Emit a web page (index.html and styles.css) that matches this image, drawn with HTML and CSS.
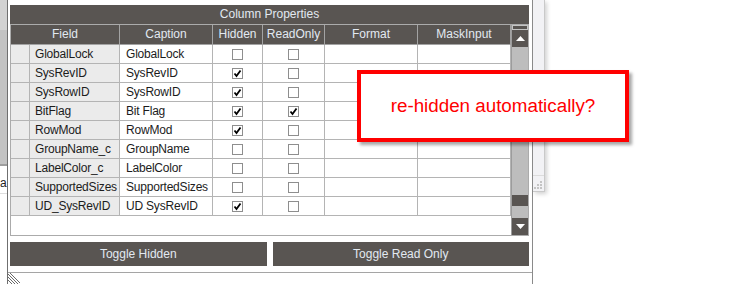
FILE: index.html
```html
<!DOCTYPE html>
<html lang="en">
<head>
    <meta charset="UTF-8">
    <meta name="viewport" content="width=device-width, initial-scale=1.0">
    <title>Column Properties</title>
    <link rel="stylesheet" href="styles.css">
</head>
<body>

    <div class="desktop">
        <!-- Window behind the dialog (left side) -->
        <div class="back-window">
            <div class="back-top"></div>
            <div class="back-bottom"><span class="back-text">a</span></div>
        </div>

        <!-- Panel behind the dialog (right side) -->
        <div class="side-panel">
            <div class="side-grip">
                <svg width="8" height="8" viewBox="0 0 8 8">
                    <rect x="6" y="0" width="2" height="2" fill="#c4c4c4"/>
                    <rect x="3" y="3" width="2" height="2" fill="#c4c4c4"/>
                    <rect x="6" y="3" width="2" height="2" fill="#c4c4c4"/>
                    <rect x="0" y="6" width="2" height="2" fill="#c4c4c4"/>
                    <rect x="3" y="6" width="2" height="2" fill="#c4c4c4"/>
                    <rect x="6" y="6" width="2" height="2" fill="#c4c4c4"/>
                </svg>
            </div>
        </div>

        <!-- Column Properties dialog -->
        <div class="dialog">
            <div class="dialog-body">
                <div class="grid">
                    <div class="grid-title">Column Properties</div>
                    <div class="grid-body">
                        <div class="table-wrap">
                            <div class="row head">
                                <div class="cell span2">Field</div>
                                <div class="cell">Caption</div>
                                <div class="cell">Hidden</div>
                                <div class="cell">ReadOnly</div>
                                <div class="cell">Format</div>
                                <div class="cell">MaskInput</div>
                            </div>
                            <div id="rows"></div>
                        </div>
                        <div class="vscroll">
                            <div class="vs-top"></div>
                            <div class="vs-btn">
                                <svg width="9" height="5" viewBox="0 0 9 5"><path d="M0 5 L4.5 0 L9 5 Z" fill="#fff"/></svg>
                            </div>
                            <div class="vs-track"></div>
                            <div class="vs-thumb"></div>
                            <div class="vs-track-end"></div>
                            <div class="vs-btn">
                                <svg width="9" height="5" viewBox="0 0 9 5"><path d="M0 0 L9 0 L4.5 5 Z" fill="#fff"/></svg>
                            </div>
                        </div>
                    </div>
                </div>

                <div class="actions">
                    <button class="btn-dark">Toggle Hidden</button>
                    <button class="btn-dark">Toggle Read Only</button>
                </div>
            </div>

            <div class="dialog-footer">
                <svg class="resize-grip" width="12" height="11" viewBox="0 0 12 11">
                    <path d="M0 1 L10 11 M0 4 L7 11 M0 7 L4 11 M2 0 L12 10" stroke="#6a6a6a" stroke-width="1"/>
                </svg>
            </div>
        </div>

        <!-- Annotation callout -->
        <div class="callout">re-hidden automatically?</div>
    </div>

    <script>
        // Column rows: field, caption, hidden, readOnly
        const columns = [
            ["GlobalLock", "GlobalLock", false, false],
            ["SysRevID", "SysRevID", true, false],
            ["SysRowID", "SysRowID", true, false],
            ["BitFlag", "Bit Flag", true, true],
            ["RowMod", "RowMod", true, false],
            ["GroupName_c", "GroupName", false, false],
            ["LabelColor_c", "LabelColor", false, false],
            ["SupportedSizes", "SupportedSizes", false, false],
            ["UD_SysRevID", "UD SysRevID", true, false]
        ];

        const tick = '<svg width="9" height="9" viewBox="0 0 9 9"><path d="M1.5 4.5 L3.5 7 L7.5 1.5" fill="none" stroke="#000" stroke-width="1.8"/></svg>';

        function checkbox(checked) {
            return '<span class="cb">' + (checked ? tick : "") + '</span>';
        }

        function buildRows() {
            let html = "";
            columns.forEach(function(c) {
                html += '<div class="row">' +
                    '<div class="cell rowhead"></div>' +
                    '<div class="cell field">' + c[0] + '</div>' +
                    '<div class="cell">' + c[1] + '</div>' +
                    '<div class="cell center">' + checkbox(c[2]) + '</div>' +
                    '<div class="cell center">' + checkbox(c[3]) + '</div>' +
                    '<div class="cell"></div>' +
                    '<div class="cell"></div>' +
                    '</div>';
            });
            document.getElementById("rows").innerHTML = html;
        }

        buildRows();
    </script>

</body>
</html>
```

FILE: styles.css
```css
/* General Styling */
* {
    box-sizing: border-box;
    margin: 0;
    padding: 0;
}

body {
    font-family: "Liberation Sans", Arial, sans-serif;
    font-size: 12px;
    background: #fff;
    overflow: hidden;
}

.desktop {
    position: relative;
    width: 738px;
    height: 284px;
    background: #fff;
}

/* Windows behind the dialog */
.back-window {
    position: absolute;
    left: 0;
    top: 0;
    width: 7px;
    height: 194px;
    border-bottom: 1px solid #dedede;
}

.back-top {
    height: 166px;
    background: #c3c3c3;
    border-top: 30px solid #d2d2d2;
    border-bottom: 2px solid #9e9e9e;
}

.back-bottom {
    height: 27px;
    overflow: hidden;
    padding-top: 10px;
}

.back-text {
    display: block;
    font-size: 12px;
    line-height: 14px;
    color: #222;
}

.side-panel {
    position: absolute;
    left: 533px;
    top: 0;
    width: 12px;
    height: 192px;
    background: #f2f2f5;
    border-right: 1px solid #c9c9c9;
    border-bottom: 1px solid #c9c9c9;
    box-shadow: 2px 2px 4px rgba(0, 0, 0, 0.18);
    display: flex;
    flex-direction: column;
    justify-content: flex-end;
}

.side-grip {
    border-top: 1px solid #dcdcdc;
    height: 16px;
    padding: 5px 0 0 1px;
}

.side-grip svg {
    display: block;
}

/* Dialog */
.dialog {
    position: absolute;
    left: 7px;
    top: 0;
    width: 526px;
    height: 284px;
    background: #fff;
    border-left: 1px solid #6f6f6f;
    border-right: 1px solid #8a8a8a;
    display: flex;
    flex-direction: column;
}

.dialog-body {
    padding: 5px 3px 0 2px;
}

/* Grid */
.grid {
    width: 519px;
}

.grid-title {
    height: 19px;
    line-height: 19px;
    background: #595552;
    color: #e2e9f1;
    text-align: center;
}

.grid-body {
    display: flex;
    height: 212px;
    border: 1px solid #ababab;
}

.table-wrap {
    width: 500px;
    background: #fff;
}

.row {
    display: grid;
    grid-template-columns: 19px 90px 93px 50px 62px 93px 93px;
    height: 19px;
}

.cell {
    border-right: 1px solid #b4b4b4;
    border-bottom: 1px solid #b4b4b4;
    padding: 0 6px;
    line-height: 18px;
    color: #1c1c1c;
    letter-spacing: -0.2px;
    white-space: nowrap;
    overflow: hidden;
}

.row.head {
    height: 20px;
}

.head .cell {
    background: #595552;
    color: #e2e9f1;
    text-align: center;
    line-height: 19px;
    letter-spacing: 0;
    border-color: #a3a3a3;
    padding: 0;
}

.head .span2 {
    grid-column: span 2;
}

.rowhead,
.field {
    background: #ebebeb;
}

.field {
    padding-left: 5px;
}

.center {
    display: flex;
    align-items: center;
    justify-content: center;
    padding: 0;
}

.cb {
    display: block;
    width: 11px;
    height: 11px;
    border: 1px solid #8e8e8e;
    background: #fff;
}

.cb svg {
    display: block;
}

/* Scrollbar */
.vscroll {
    width: 17px;
    border-left: 1px solid #9c9c9c;
    display: flex;
    flex-direction: column;
    background: #bdbdbd;
}

.vs-top {
    height: 5px;
    background: #595552;
    border: 1px solid #c4c4c4;
}

.vs-btn {
    height: 17px;
    background: #595552;
    display: flex;
    align-items: center;
    justify-content: center;
}

.vs-track {
    height: 148px;
}

.vs-thumb {
    height: 11px;
    background: #595552;
}

.vs-track-end {
    height: 12px;
}

/* Buttons */
.actions {
    display: flex;
    gap: 6px;
    margin-top: 6px;
}

.btn-dark {
    flex: 1;
    height: 24px;
    border: none;
    background: #595552;
    color: #e2e9f1;
    font-family: "Liberation Sans", Arial, sans-serif;
    font-size: 12px;
}

.dialog-footer {
    margin-top: 6px;
    border-top: 1px solid #a5a5a5;
    flex: 1;
}

.resize-grip {
    display: block;
}

/* Annotation */
.callout {
    position: absolute;
    left: 357px;
    top: 70px;
    width: 272px;
    height: 72px;
    border: 4px solid #ff0000;
    background: #fff;
    box-shadow: 3px 3px 3px rgba(0, 0, 0, 0.35);
    color: #f00;
    font-size: 18.8px;
    display: flex;
    align-items: center;
    justify-content: center;
}
```
